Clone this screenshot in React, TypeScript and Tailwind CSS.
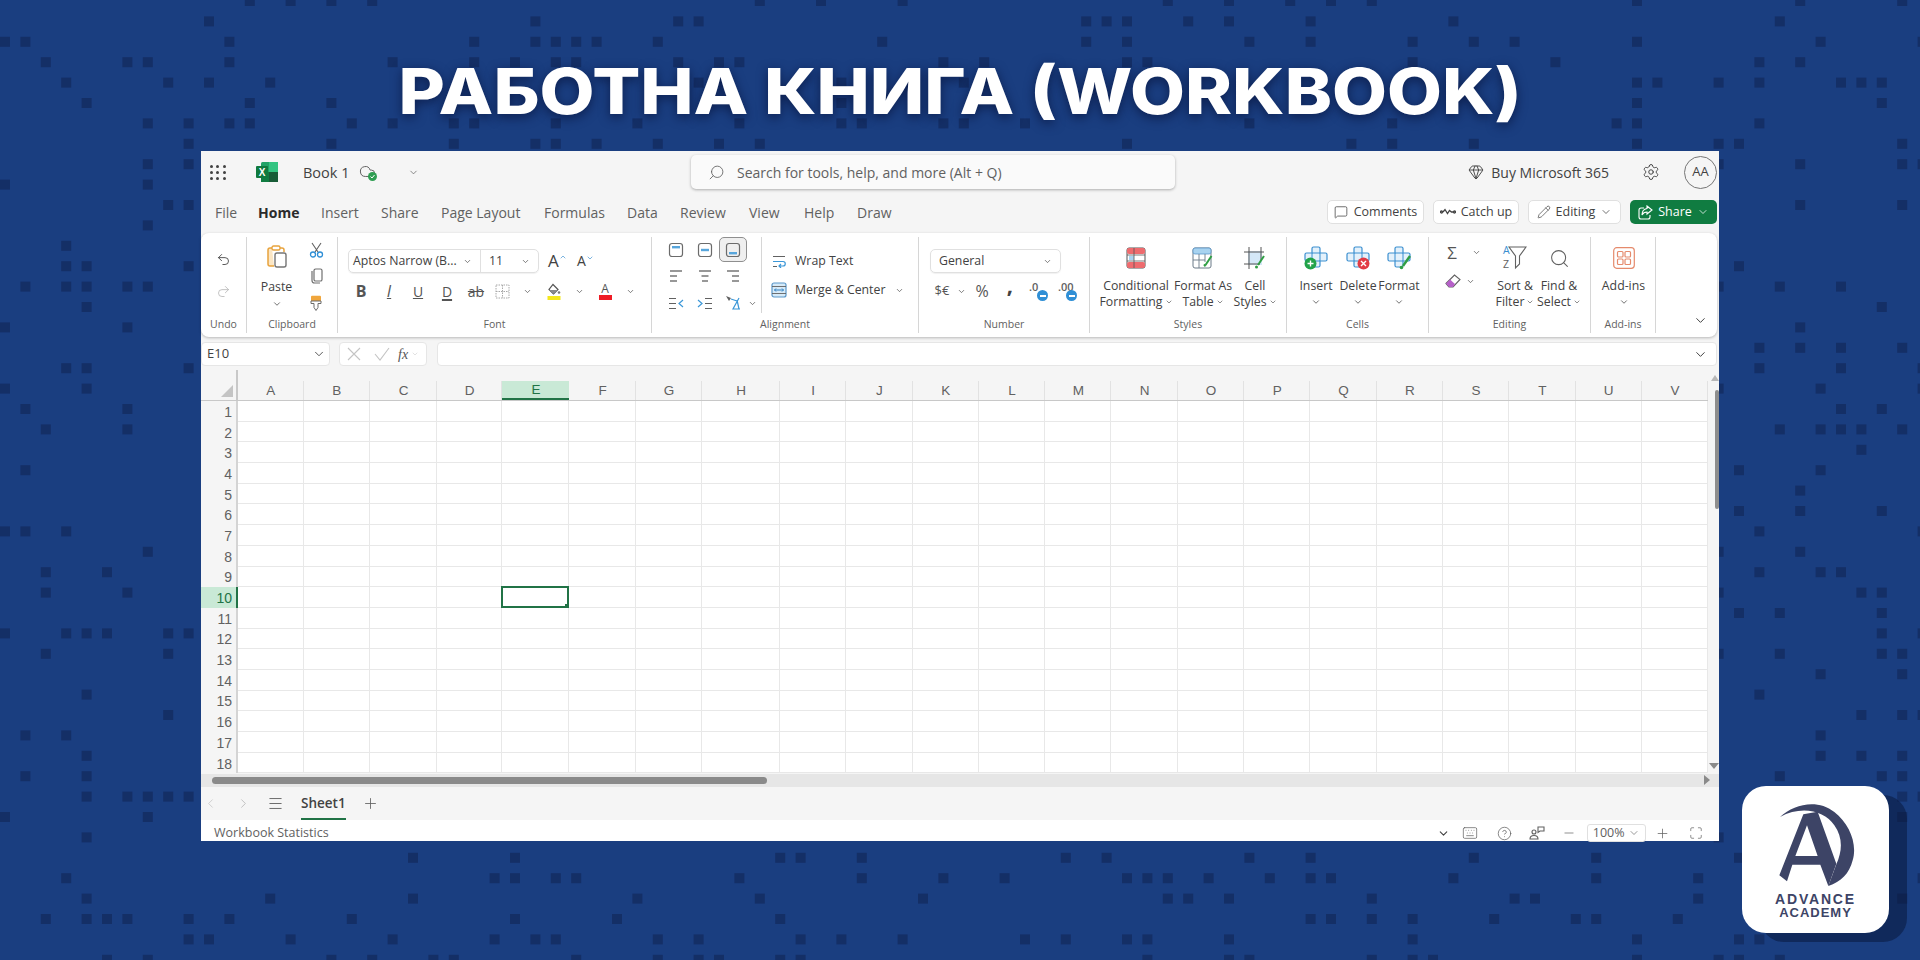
import type { ReactNode } from "react"
import {
  ChevronDown,
  ChevronLeft,
  ChevronRight,
  ChevronUp,
  CircleHelp,
  Cloud,
  Gem,
  Keyboard,
  Maximize,
  Menu,
  MessageSquare,
  Minus,
  Pencil,
  Plus,
  Search,
  Settings,
  Undo2,
  Redo2,
} from "lucide-react"

// background squares, one list of column numbers per row of the 20.4px grid
const dots: number[][] = [
  [12, 14, 16, 18, 37, 40, 44, 57, 60, 63, 65, 67, 80, 88, 93],
  [10, 26, 33, 34, 53, 54, 55, 58, 60, 64, 71, 87],
  [0, 1, 11, 23, 26, 27, 28, 29, 32, 43, 53, 55, 61, 64, 69, 72, 74, 80, 89, 94],
  [2, 6, 7, 11, 19, 23, 25, 27, 28, 33, 35, 36, 46, 48, 55, 56, 69, 76, 86, 88],
  [3, 8, 10, 13, 34, 41, 47, 80, 81, 84, 86, 90, 91, 92],
  [4, 12, 16, 41, 80, 92],
  [7, 9, 11, 12, 17, 19, 22, 23, 27, 31, 36, 41, 42, 46, 47, 50, 61, 68, 79, 80, 86],
  [9, 16, 22, 26, 27, 29, 32, 35, 37, 55, 66, 68, 72, 80, 84, 85, 93],
  [7, 9, 84, 88, 93, 94],
  [0, 7],
  [8, 9, 88, 93],
  [7],
  [3],
  [3, 4, 9, 85],
  [1, 3, 4, 6, 7, 84, 87, 90],
  [4, 92],
  [0, 6, 88],
  [86, 88, 90, 93],
  [3, 4, 9, 86, 90, 94],
  [0, 4, 84, 89, 94],
  [1, 6, 90, 92],
  [2, 6, 87, 89, 90, 91, 93],
  [91],
  [1, 85, 89],
  [88],
  [85, 88, 92],
  [0, 1, 3, 86, 94],
  [7, 84, 88],
  [2, 5, 86, 89, 90],
  [2, 6, 84, 91, 92],
  [85, 87, 92],
  [0, 3, 4, 5, 8, 9, 92, 94],
  [2, 8, 84, 87, 92, 93],
  [89, 93],
  [4, 86],
  [8, 91, 93, 94],
  [1, 3, 89],
  [4, 89, 91, 93],
  [1, 4, 87, 92, 93],
  [4, 6, 7, 8, 9, 93, 94],
  [0, 7, 93],
  [4, 84],
  [20, 25, 38, 39, 42, 52, 54, 61, 64, 72, 78, 85],
  [3, 24, 25, 27, 28, 36, 42, 46, 49, 55, 56, 57, 59, 62, 64, 65, 71, 78, 83, 94],
  [4, 13, 20, 31, 37, 45, 57, 58, 60, 67, 74, 75, 83, 93],
  [2, 4, 5, 6, 9, 11, 17, 25, 30, 38, 64, 65, 67, 69, 73, 77, 78, 82],
  [9, 10, 14, 19, 24, 26, 27, 32, 34, 39, 41, 44, 50, 52, 55, 56, 60, 69, 80, 85, 86],
  [5, 7, 16, 18, 21, 22, 28, 32, 34, 35, 38, 39, 56, 60, 61, 67, 69, 70, 80, 84, 85, 87],
]

const tabs = [
  { name: "File", w: "w-[43px]" },
  { name: "Home", w: "w-[63px]" },
  { name: "Insert", w: "w-[60px]" },
  { name: "Share", w: "w-[60px]" },
  { name: "Page Layout", w: "w-[103px]" },
  { name: "Formulas", w: "w-[83px]" },
  { name: "Data", w: "w-[53px]" },
  { name: "Review", w: "w-[69px]" },
  { name: "View", w: "w-[55px]" },
  { name: "Help", w: "w-[53px]" },
  { name: "Draw", w: "w-[40px]" },
]

const columns = "ABCDEFGHIJKLMNOPQRSTUV".split("")
const rows = Array.from({ length: 18 }, (_, i) => i + 1)

function Chev({ size = 10, className = "" }: { size?: number; className?: string }) {
  return <ChevronDown size={size} strokeWidth={2} className={"text-[#555] " + className} />
}

function AlignBox({ y }: { y: number }) {
  return (
    <svg width="16" height="16" viewBox="0 0 16 16" fill="none">
      <rect x="1.5" y="1.5" width="13" height="13" rx="2.5" stroke="#6b6b6b" strokeWidth="1.2" />
      <rect x="4" y={y} width="8" height="2.4" fill="#58a6dc" />
    </svg>
  )
}

function AlignLines({ kind }: { kind: "left" | "center" | "right" }) {
  const x = kind === "left" ? 2 : kind === "center" ? 4.5 : 7
  return (
    <svg width="16" height="14" viewBox="0 0 16 14" stroke="#616161" strokeWidth="1.3">
      <path d="M2 2H14" />
      <path d={`M${x} 7H${x + 7}`} />
      <path d={kind === "left" ? "M2 12H9" : kind === "center" ? "M5 12H11" : "M7 12H14"} />
    </svg>
  )
}

function Group({ w, label, children }: { w: string; label: string; children: ReactNode }) {
  return (
    <div className={w + " my-[4px] flex shrink-0 flex-col border-r border-[#d6d6d6]"}>
      <div className="h-[78px]">{children}</div>
      <div className="flex h-[18px] items-center justify-center pt-[1px] text-[10.5px] text-[#616161]">{label}</div>
    </div>
  )
}

function BigButton({ w, icon, top, bottom }: { w: string; icon: ReactNode; top: string; bottom?: string }) {
  return (
    <div className={w + " flex shrink-0 flex-col items-center pt-[9px]"}>
      <div className="flex h-[24px] items-center justify-center">{icon}</div>
      <div className="mt-[8px] flex h-[16px] items-center whitespace-nowrap leading-none">{top}</div>
      <div className="flex h-[16px] items-center gap-[2px] whitespace-nowrap leading-none">
        {bottom}
        <Chev size={bottom ? 8 : 10} />
      </div>
    </div>
  )
}

function Box({ w, children, className = "" }: { w: string; children: ReactNode; className?: string }) {
  return <div className={w + " flex shrink-0 items-center justify-center " + className}>{children}</div>
}

function ExcelLogo() {
  return (
    <svg width="22" height="20" viewBox="0 0 22 20">
      <rect x="5" y="0" width="17" height="20" rx="1.5" fill="#21a366" />
      <rect x="13" y="0" width="9" height="10" fill="#33c481" />
      <rect x="5" y="10" width="17" height="10" fill="#107c41" />
      <rect x="13" y="10" width="9" height="10" fill="#185c37" />
      <rect x="0" y="4" width="12" height="12" rx="1" fill="#0f7a3e" />
      <text x="6" y="13.5" fontSize="10" fontWeight="700" fill="#fff" textAnchor="middle" fontFamily="Liberation Sans, sans-serif">
        X
      </text>
    </svg>
  )
}

function PasteIcon() {
  return (
    <svg width="20" height="23" viewBox="0 0 20 23" fill="none">
      <path d="M5 3H3a2 2 0 0 0-2 2v14a2 2 0 0 0 2 2h4" stroke="#e8a33d" strokeWidth="1.5" fill="#fbe6c4" />
      <path d="M13 3h2a2 2 0 0 1 2 2v2" stroke="#e8a33d" strokeWidth="1.5" />
      <rect x="5" y="1" width="8" height="4" rx="1.5" fill="#fff" stroke="#e8a33d" strokeWidth="1.4" />
      <rect x="8" y="8" width="11" height="14" rx="2" fill="#fff" stroke="#757575" strokeWidth="1.4" />
    </svg>
  )
}

function CutIcon() {
  return (
    <svg width="15" height="16" viewBox="0 0 15 16" fill="none">
      <path d="M3 1l6 9M12 1L6 10" stroke="#616161" strokeWidth="1.1" />
      <circle cx="4" cy="12.5" r="2.5" stroke="#2f8fd6" strokeWidth="1.3" />
      <circle cx="11" cy="12.5" r="2.5" stroke="#2f8fd6" strokeWidth="1.3" />
    </svg>
  )
}

function CopyIcon() {
  return (
    <svg width="13" height="16" viewBox="0 0 13 16" fill="none" stroke="#707070" strokeWidth="1.2">
      <path d="M2 3v9.5A2.5 2.5 0 0 0 4.5 15H10" />
      <rect x="4" y="1" width="8" height="12" rx="1.6" fill="#fff" />
    </svg>
  )
}

function PainterIcon() {
  return (
    <svg width="12" height="16" viewBox="0 0 12 16" fill="none">
      <rect x="1" y="0.8" width="10" height="8" rx="1" fill="#f0a63c" />
      <path d="M1 6h10v2.5H8v4l-2 3-2-3v-4H1z" fill="#fff" stroke="#6b6b6b" strokeWidth="1" />
    </svg>
  )
}

function BordersIcon() {
  return (
    <svg width="15" height="15" viewBox="0 0 15 15" fill="none" stroke="#a8a8a8" strokeWidth="1" strokeDasharray="1.5 1">
      <rect x="1" y="1" width="13" height="13" />
      <path d="M7.5 1v13M1 7.5h13" />
    </svg>
  )
}

function FillIcon() {
  return (
    <svg width="14" height="17" viewBox="0 0 14 17" fill="none">
      <path d="M6 1.5L11 6.5 6.5 11 2 6.500z" stroke="#555" strokeWidth="1.2" />
      <path d="M2 7h9l-4.500 4z" fill="#8a8a8a" />
      <circle cx="12" cy="9.5" r="1.3" fill="#777" />
      <rect x="0.5" y="13" width="13" height="4" fill="#f4e71d" />
    </svg>
  )
}

function WrapIcon() {
  return (
    <svg width="14" height="13" viewBox="0 0 14 13" fill="none" strokeWidth="1.2">
      <path d="M1 1.5h12M1 11.5h4" stroke="#616161" />
      <path d="M1 6.5h10a1.700 1.700 0 0 1 0 4.500H7.500M9 9l-2 2 2 2" stroke="#3b97d8" />
    </svg>
  )
}

function MergeIcon() {
  return (
    <svg width="16" height="16" viewBox="0 0 16 16" fill="none">
      <rect x="1" y="1" width="14" height="14" rx="2" stroke="#5a97c9" strokeWidth="1.2" fill="#d6eaf8" />
      <path d="M1 4.500h14M1 11.500h14" stroke="#616161" strokeWidth="0.9" />
      <path d="M3.500 8h9M5 6.500L3.500 8 5 9.500M11 6.500L12.500 8 11 9.500" stroke="#2f80c2" strokeWidth="1" />
    </svg>
  )
}

function IndentIcon({ flip = false }: { flip?: boolean }) {
  return (
    <svg width="16" height="13" viewBox="0 0 16 13" fill="none" strokeWidth="1.2" className={flip ? "-scale-x-100" : ""}>
      <path d="M1 1.500h7M1 6.500h7M1 11.500h7" stroke="#616161" />
      <path d="M15 3l-4 3.500 4 3.500" stroke="#3b97d8" />
    </svg>
  )
}

function OrientationIcon() {
  return (
    <svg width="16" height="16" viewBox="0 0 16 16" fill="none">
      <path d="M1 1l5 2-2 3z" fill="#616161" />
      <path d="M6 4l6 2M14 3l-6 11h7M12 5l2 9" stroke="#3b97d8" strokeWidth="1.2" />
    </svg>
  )
}

function DecimalIcon({ text }: { text: string }) {
  return (
    <div className="relative flex h-[20px] w-[20px] items-start justify-start text-[11px] font-semibold leading-[12px] text-[#616161]">
      {text}
      <span className="absolute bottom-0 right-[1px] flex h-[11px] w-[11px] items-center justify-center rounded-full bg-[#2f8fd6]">
        <span className="h-[2px] w-[6px] bg-white" />
      </span>
    </div>
  )
}

function CondFormatIcon() {
  return (
    <svg width="20" height="22" viewBox="0 0 20 22">
      <rect x="1" y="1" width="18" height="20" rx="2" fill="#fff" stroke="#555" strokeWidth="1" />
      <rect x="1" y="1" width="18" height="6" rx="2" fill="#ee6b6e" />
      <rect x="1" y="15" width="18" height="6" rx="2" fill="#ee6b6e" />
      <rect x="3" y="9" width="5" height="4" fill="#a8d3f0" />
      <path d="M1 8h18M1 14h18M8 1v20" stroke="#555" strokeWidth="0.8" />
    </svg>
  )
}

function TablePenIcon() {
  return (
    <svg width="22" height="22" viewBox="0 0 22 22" fill="none">
      <rect x="1" y="1" width="18" height="20" rx="2" fill="#fff" stroke="#6b7a88" strokeWidth="1" />
      <rect x="1" y="1" width="18" height="6" rx="2" fill="#a8d3f0" stroke="#5a97c9" strokeWidth="0.8" />
      <path d="M1 13h12M7 7v14M13 7v8" stroke="#6b7a88" strokeWidth="0.9" />
      <path d="M19.500 9l-6 9" stroke="#2f9e44" strokeWidth="2" />
      <path d="M12 19l1.500-1.200" stroke="#2f9e44" strokeWidth="2.4" />
    </svg>
  )
}

function CellStylesIcon() {
  return (
    <svg width="22" height="22" viewBox="0 0 22 22" fill="none">
      <rect x="4" y="4" width="14" height="14" fill="#d4e8f8" />
      <path d="M0 5h20M0 17h16M5 0v22M17 0v13" stroke="#555" strokeWidth="1" />
      <path d="M20 9l-6 9" stroke="#2f9e44" strokeWidth="2" />
      <circle cx="12.500" cy="20" r="1.500" fill="#2f9e44" />
    </svg>
  )
}

function CrossCells({ badge }: { badge: "add" | "del" | "pen" }) {
  return (
    <svg width="24" height="24" viewBox="0 0 24 24" fill="none">
      <path
        d="M8 7V2.500A1.500 1.500 0 0 1 9.500 1h5A1.500 1.500 0 0 1 16 2.500V7h5.500A1.500 1.500 0 0 1 23 8.500v5a1.500 1.500 0 0 1-1.500 1.500H16v4.500a1.500 1.500 0 0 1-1.500 1.500h-5A1.500 1.500 0 0 1 8 19.500V15H2.500A1.500 1.500 0 0 1 1 13.500v-5A1.500 1.500 0 0 1 2.500 7z"
        fill="#e4f1fb"
        stroke="#3b8fd0"
        strokeWidth="1.2"
      />
      <path d="M8 7h8v8H8z" stroke="#3b8fd0" strokeWidth="1" />
      {badge === "add" && (
        <g>
          <circle cx="6.500" cy="17.500" r="6" fill="#22a34a" />
          <path d="M3.500 17.500h6M6.500 14.500v6" stroke="#fff" strokeWidth="1.4" />
        </g>
      )}
      {badge === "del" && (
        <g>
          <circle cx="17.500" cy="17.500" r="6" fill="#e23b44" />
          <path d="M15 15l5 5M20 15l-5 5" stroke="#fff" strokeWidth="1.4" />
        </g>
      )}
      {badge === "pen" && (
        <g>
          <path d="M23 10l-7 10" stroke="#2f9e44" strokeWidth="2.4" />
          <circle cx="14.500" cy="21.500" r="1.800" fill="#2f9e44" />
        </g>
      )}
    </svg>
  )
}

function EraserIcon() {
  return (
    <svg width="16" height="14" viewBox="0 0 16 14" fill="none">
      <path d="M1 9.500L9.500 1 15 5.500 8 13H4z" fill="#fff" stroke="#616161" strokeWidth="1.1" />
      <path d="M1 9.500L5 5.500 10 10 8 13H4z" fill="#b660c9" />
    </svg>
  )
}

function SortIcon() {
  return (
    <div className="relative h-[24px] w-[24px]">
      <svg width="24" height="24" viewBox="0 0 24 24" fill="none" className="absolute left-0 top-0">
        <path d="M6 1h17l-6.500 9v8l-4 4V10z" stroke="#616161" strokeWidth="1.1" fill="#fff" />
      </svg>
      <span className="absolute left-0 top-[-2px] text-[10.5px] leading-[13px] text-[#3b8fd0]">A</span>
      <span className="absolute bottom-[-1px] left-0 text-[10.5px] leading-[13px] text-[#616161]">Z</span>
    </div>
  )
}

function AddinsIcon() {
  return (
    <svg width="22" height="22" viewBox="0 0 22 22" fill="none" stroke="#e58a6c" strokeWidth="1.2">
      <rect x="0.7" y="0.7" width="20.6" height="20.6" rx="3" />
      <rect x="4.500" y="4.500" width="5.500" height="5.500" rx="1" />
      <rect x="12" y="4.500" width="5.500" height="5.500" rx="1" />
      <rect x="4.500" y="12" width="5.500" height="5.500" rx="1" />
      <rect x="12" y="12" width="5.500" height="5.500" rx="1" />
    </svg>
  )
}

function Ribbon() {
  return (
    <div className="flex h-[104px] w-[1516px] rounded-[8px] bg-white text-[12.3px] text-[#424242] shadow-[0_1px_3px_rgba(0,0,0,0.25)]">
      <Group w="w-[46px]" label="Undo">
        <div className="flex flex-col items-center gap-[17px] pt-[15px]">
          <Undo2 size={15} strokeWidth={1.4} className="text-[#444]" />
          <Redo2 size={15} strokeWidth={1.3} className="text-[#b5b5b5]" />
        </div>
      </Group>

      <Group w="w-[91px]" label="Clipboard">
        <div className="flex">
          <div className="flex w-[59px] flex-col items-center pt-[8px]">
            <PasteIcon />
            <div className="mt-[11px] h-[16px] leading-[16px]">Paste</div>
            <Chev size={10} className="mt-[4px]" />
          </div>
          <div className="flex w-[20px] flex-col items-center pt-[5px]">
            <CutIcon />
            <div className="mt-[10px]">
              <CopyIcon />
            </div>
            <div className="mt-[11px]">
              <PainterIcon />
            </div>
          </div>
        </div>
      </Group>

      <Group w="w-[314px]" label="Font">
        <div className="flex pl-[10px] pt-[12px]">
          <div className="flex h-[24px] w-[191px] rounded-[5px] border border-[#e0e0e0] shadow-[0_1px_1px_rgba(0,0,0,0.06)]">
            <div className="flex w-[132px] items-center justify-between border-r border-[#e0e0e0] pl-[4px] pr-[8px] whitespace-nowrap">
              <span>Aptos Narrow (B...</span>
              <Chev size={9} />
            </div>
            <div className="flex flex-1 items-center justify-between pl-[8px] pr-[8px]">
              <span>11</span>
              <Chev size={9} />
            </div>
          </div>
          <div className="ml-[9px] flex h-[22px] w-[17px] items-end text-[17px] leading-[21px]">
            A
            <ChevronUp size={8} strokeWidth={2} className="mb-[10px] shrink-0 text-[#3b8fd0]" />
          </div>
          <div className="ml-[12px] flex h-[22px] w-[17px] items-end text-[14px] leading-[20px]">
            A
            <ChevronDown size={8} strokeWidth={2} className="mb-[9px] shrink-0 text-[#3b8fd0]" />
          </div>
        </div>
        <div className="mt-[6px] flex h-[24px] pl-[10px] text-[#555]">
          <Box w="w-[26px]" className="text-[16px] font-bold">B</Box>
          <Box w="w-[30px]" className="text-[16px] italic underline decoration-1">I</Box>
          <Box w="w-[28px]" className="text-[14px] underline">U</Box>
          <Box w="w-[30px]" className="text-[14px] underline decoration-2 underline-offset-2">D</Box>
          <Box w="w-[28px]" className="text-[14px] line-through">ab</Box>
          <Box w="w-[24px]"><BordersIcon /></Box>
          <Box w="w-[27px]"><Chev size={9} /></Box>
          <Box w="w-[26px]"><FillIcon /></Box>
          <Box w="w-[24px]"><Chev size={9} /></Box>
          <Box w="w-[28px]">
            <div className="flex flex-col items-center">
              <span className="text-[12px] leading-[12px]">A</span>
              <span className="h-[5px] w-[13px] bg-[#ee1c25]" />
            </div>
          </Box>
          <Box w="w-[22px]"><Chev size={9} /></Box>
        </div>
      </Group>

      <Group w="w-[267px]" label="Alignment">
        <div className="flex h-full">
          <div className="h-[76px] w-[110px] border-r border-[#d6d6d6] pl-[10px]">
            <div className="flex h-[25px]">
              <Box w="w-[28px]"><AlignBox y={4} /></Box>
              <Box w="w-[29px]"><AlignBox y={6.8} /></Box>
              <Box w="w-[28px]" className="rounded-[5px] border border-[#8f8f8f] bg-[#efefef]"><AlignBox y={10} /></Box>
            </div>
            <div className="flex h-[28px]">
              <Box w="w-[28px]"><AlignLines kind="left" /></Box>
              <Box w="w-[29px]"><AlignLines kind="center" /></Box>
              <Box w="w-[28px]"><AlignLines kind="right" /></Box>
            </div>
            <div className="flex h-[26px]">
              <Box w="w-[28px]"><IndentIcon /></Box>
              <Box w="w-[29px]"><IndentIcon flip /></Box>
              <Box w="w-[28px]"><OrientationIcon /></Box>
              <Box w="w-[10px]"><Chev size={9} /></Box>
            </div>
          </div>
          <div className="pt-[12px]">
            <div className="flex h-[24px] items-center">
              <Box w="w-[33px]"><WrapIcon /></Box>
              <span>Wrap Text</span>
            </div>
            <div className="mt-[5px] flex h-[24px] items-center">
              <Box w="w-[33px]"><MergeIcon /></Box>
              <span>Merge &amp; Center</span>
              <Chev size={9} className="ml-[10px]" />
            </div>
          </div>
        </div>
      </Group>

      <Group w="w-[171px]" label="Number">
        <div className="pl-[11px] pt-[12px]">
          <div className="flex h-[24px] w-[131px] items-center justify-between rounded-[5px] border border-[#e0e0e0] pl-[8px] pr-[8px] shadow-[0_1px_1px_rgba(0,0,0,0.06)]">
            <span>General</span>
            <Chev size={9} />
          </div>
          <div className="mt-[6px] flex h-[24px] text-[#555]">
            <Box w="w-[24px]" className="text-[13px]">$€</Box>
            <Box w="w-[14px]"><Chev size={9} /></Box>
            <Box w="w-[28px]" className="text-[16px]">%</Box>
            <Box w="w-[28px]" className="text-[22px] font-bold leading-none text-[#424242]">
              <span className="-mt-[14px]">,</span>
            </Box>
            <Box w="w-[30px]"><DecimalIcon text=".0" /></Box>
            <Box w="w-[28px]"><DecimalIcon text=".00" /></Box>
          </div>
        </div>
      </Group>

      <Group w="w-[197px]" label="Styles">
        <div className="flex pl-[10px]">
          <BigButton w="w-[72px]" icon={<CondFormatIcon />} top="Conditional" bottom="Formatting" />
          <BigButton w="w-[62px]" icon={<TablePenIcon />} top="Format As" bottom="Table" />
          <BigButton w="w-[42px]" icon={<CellStylesIcon />} top="Cell" bottom="Styles" />
        </div>
      </Group>

      <Group w="w-[142px]" label="Cells">
        <div className="flex pl-[8px]">
          <BigButton w="w-[42px]" icon={<CrossCells badge="add" />} top="Insert" />
          <BigButton w="w-[42px]" icon={<CrossCells badge="del" />} top="Delete" />
          <BigButton w="w-[40px]" icon={<CrossCells badge="pen" />} top="Format" />
        </div>
      </Group>

      <Group w="w-[162px]" label="Editing">
        <div className="flex">
          <div className="w-[64px] pt-[6px]">
            <div className="flex h-[18px] items-center pl-[15px]">
              <span className="w-[16px] text-center text-[17px] leading-none text-[#555]">Σ</span>
              <Chev size={9} className="ml-[12px]" />
            </div>
            <div className="mt-[11px] flex h-[18px] items-center pl-[16px]">
              <EraserIcon />
              <Chev size={9} className="ml-[5px]" />
            </div>
          </div>
          <BigButton w="w-[44px]" icon={<SortIcon />} top="Sort &" bottom="Filter" />
          <BigButton
            w="w-[44px]"
            icon={<Search size={21} strokeWidth={1.2} className="text-[#616161]" />}
            top="Find &"
            bottom="Select"
          />
        </div>
      </Group>

      <Group w="w-[65px]" label="Add-ins">
        <BigButton w="w-[65px]" icon={<AddinsIcon />} top="Add-ins" />
      </Group>

      <div className="flex flex-1 items-end justify-end pb-[9px] pr-[9px]">
        <ChevronDown size={15} strokeWidth={1.6} className="text-[#424242]" />
      </div>
    </div>
  )
}

function SheetGrid() {
  return (
    <div className="grid h-[403.6px] grid-cols-[37px_65.5px_66.5px_67px_65px_67px_67px_66px_78px_repeat(14,66.3px)] grid-rows-[31px_repeat(18,20.7px)] font-['Liberation_Sans',sans-serif] text-[13.5px] text-[#616161]">
      <div className="flex items-end justify-end border-r-2 border-b border-[#c8c8c8] pb-[3px] pr-[3px]">
        <span className="h-0 w-0 border-b-[12px] border-l-[12px] border-b-[#c4c4c4] border-l-transparent" />
      </div>
      {columns.map((c) => (
        <div key={c} className="flex flex-col justify-end border-b border-[#c8c8c8]">
          <div
            className={
              c === "E"
                ? "flex h-[19px] items-center justify-center border-b-2 border-[#217346] bg-[#c9e9d6] pl-[1px] pt-[2px] text-[#217346]"
                : "flex h-[19px] items-center justify-center border-r border-[#e2e2e2] pl-[1px] pt-[2px]"
            }
          >
            {c}
          </div>
        </div>
      ))}
      {rows.map((r) => [
        <div
          key={"n" + r}
          className={
            r === 10
              ? "flex items-center justify-end border-r-2 border-[#217346] bg-[#c9e9d6] pr-[4px] pt-[2px] text-[14px] text-[#217346]"
              : "flex items-center justify-end border-r-2 border-[#d4d4d4] pr-[4px] pt-[2px] text-[14px]"
          }
        >
          {r}
        </div>,
        ...columns.map((c) => (
          <div key={c + r} className="relative border-r border-b border-[#e8e8e8] bg-white">
            {c === "E" && r === 10 && (
              <div className="absolute -left-[1px] -top-[1px] h-[22px] w-[68px] border-2 border-[#217346]">
                <span className="absolute -bottom-[4px] -right-[4px] h-[6px] w-[6px] bg-[#217346]" />
              </div>
            )}
          </div>
        )),
      ])}
    </div>
  )
}

export default function App() {
  return (
    <div className="relative h-[960px] w-[1920px] overflow-hidden bg-[#1a3e80] font-['Open_Sans',sans-serif]">
      <svg className="absolute inset-0" width="1920" height="960" viewBox="0 0 1920 960">
        {dots.map((row, j) =>
          row.map((k) => <rect key={j + "-" + k} x={k * 20.4} y={j * 20.4 - 4} width="10" height="10" fill="#142f66" />),
        )}
      </svg>

      <div className="relative flex h-[151px] items-start justify-center pt-[45px]">
        <h1 className="scale-x-[1.13] whitespace-nowrap font-['Inter',sans-serif] text-[63px] font-extrabold leading-[92px] text-white [text-shadow:0_3px_10px_rgba(8,20,60,0.75)]">
          РАБОТНА КНИГА (WORKBOOK)
        </h1>
      </div>

      <div className="relative ml-[201px] flex h-[690px] w-[1518px] flex-col bg-[#f5f5f5]">
        <div className="flex h-[42px] shrink-0 items-center text-[#424242]">
          <div className="ml-[9px] grid w-[16px] grid-cols-3 gap-[3px]">
            {Array.from({ length: 9 }, (_, i) => (
              <span key={i} className="h-[3px] w-[3px] rounded-full bg-[#424242]" />
            ))}
          </div>
          <div className="ml-[30px]">
            <ExcelLogo />
          </div>
          <span className="ml-[25px] w-[44px] whitespace-nowrap pt-[1px] text-[14.5px]">Book 1</span>
          <div className="relative ml-[12px] h-[18px] w-[18px]">
            <Cloud size={17} strokeWidth={1.3} className="text-[#555]" />
            <span className="absolute bottom-0 right-0 flex h-[9px] w-[9px] items-center justify-center rounded-full bg-[#2f9e52]">
              <svg width="7" height="7" viewBox="0 0 7 7" fill="none" stroke="#fff" strokeWidth="1">
                <path d="M1.500 3.500l1.500 1.500 2.500-3" />
              </svg>
            </span>
          </div>
          <ChevronDown size={11} strokeWidth={1.6} className="ml-[31px] text-[#616161]" />
          <div className="ml-[272px] flex h-[34px] w-[484px] items-center rounded-[5px] bg-[#fafafa] pl-[17px] shadow-[0_1px_3px_rgba(0,0,0,0.3)]">
            <Search size={17} strokeWidth={1.2} className="-scale-x-100 text-[#616161]" />
            <span className="ml-[12px] whitespace-nowrap text-[14px] text-[#616161]">
              Search for tools, help, and more (Alt + Q)
            </span>
          </div>
          <div className="ml-auto flex items-center pr-[2px]">
            <Gem size={16} strokeWidth={1.4} />
            <span className="ml-[7px] whitespace-nowrap text-[14px]">Buy Microsoft 365</span>
            <Settings size={18} strokeWidth={1.3} className="ml-[33px]" />
            <div className="ml-[24px] flex h-[33px] w-[33px] items-center justify-center rounded-full border border-[#757575] text-[13px]">
              AA
            </div>
          </div>
        </div>

        <div className="flex h-[40px] shrink-0 items-center pb-[2px] pl-[14px] text-[14px] text-[#616161]">
          {tabs.map((t) => (
            <span
              key={t.name}
              className={t.w + (t.name === "Home" ? " font-bold text-[#2b2b2b]" : "") + " whitespace-nowrap"}
            >
              {t.name}
            </span>
          ))}
          <div className="ml-auto flex items-center gap-[9px] pr-[2px] text-[12.5px] text-[#424242]">
            <div className="flex h-[24px] w-[97px] items-center justify-center gap-[6px] rounded-[5px] border border-[#e0e0e0] bg-white">
              <MessageSquare size={14} strokeWidth={1.3} />
              Comments
            </div>
            <div className="flex h-[24px] w-[86px] items-center justify-center gap-[5px] rounded-[5px] border border-[#e0e0e0] bg-white">
              <svg width="16" height="8" viewBox="0 0 16 8" fill="none" stroke="#424242" strokeWidth="1.3">
                <circle cx="1.500" cy="4" r="1" />
                <path d="M3 4l2-2.500 2.500 4 2-3 2 1.500h1.500" />
                <circle cx="14.500" cy="4" r="1" />
              </svg>
              Catch up
            </div>
            <div className="flex h-[24px] w-[93px] items-center justify-center gap-[5px] rounded-[5px] border border-[#e0e0e0] bg-white">
              <Pencil size={14} strokeWidth={1.2} />
              Editing
              <ChevronDown size={12} strokeWidth={1.5} />
            </div>
            <div className="flex h-[24px] w-[87px] items-center justify-center gap-[5px] rounded-[5px] bg-[#107c41] text-white">
              <svg width="15" height="15" viewBox="0 0 15 15" fill="none" stroke="#fff" strokeWidth="1.1">
                <path d="M6 3H3a2 2 0 0 0-2 2v7a2 2 0 0 0 2 2h7a2 2 0 0 0 2-2v-2" />
                <path d="M9 1l5 4-5 4V7C6.500 7 5 8 4 10c0-4 2-6 5-6.500z" />
              </svg>
              Share
              <ChevronDown size={12} strokeWidth={1.5} />
            </div>
          </div>
        </div>

        <Ribbon />

        <div className="mt-[5px] flex h-[24px] shrink-0 gap-[9px] pr-[2px] text-[#424242]">
          <div className="flex w-[129px] items-center justify-between rounded-[4px] border border-[#e6e6e6] bg-white pl-[5px] pr-[3px] text-[13px]">
            E10
            <ChevronDown size={14} strokeWidth={1.5} />
          </div>
          <div className="flex w-[88px] items-center rounded-[4px] border border-[#e6e6e6] bg-white pl-[6px] text-[#c4c4c4]">
            <svg width="16" height="16" viewBox="0 0 16 16" fill="none" stroke="#c4c4c4" strokeWidth="1.1">
              <path d="M2 2l12 12M14 2L2 14" />
            </svg>
            <svg width="16" height="16" viewBox="0 0 16 16" fill="none" stroke="#c4c4c4" strokeWidth="1.1" className="ml-[12px]">
              <path d="M1 8l5 6L15 2" />
            </svg>
            <span className="ml-[8px] font-['Liberation_Serif',serif] text-[14px] italic text-[#555]">fx</span>
            <ChevronDown size={8} strokeWidth={1.5} className="ml-[3px]" />
          </div>
          <div className="ml-px flex flex-1 items-center justify-end rounded-[4px] border border-[#e6e6e6] bg-white pr-[8px]">
            <ChevronDown size={15} strokeWidth={1.6} className="text-[#424242]" />
          </div>
        </div>

        <div className="mt-[4px] flex">
          <SheetGrid />
          <div className="flex w-[11px] flex-col items-end">
            <span className="mt-[5px] h-0 w-0 border-x-[4px] border-b-[6px] border-x-transparent border-b-[#b8b8b8]" />
            <span className="mt-[9px] h-[119px] w-[4px] rounded-full bg-[#8e8e8e]" />
            <span className="mb-[5px] mt-auto h-0 w-0 border-x-[5px] border-t-[6px] border-x-transparent border-t-[#8a8a8a]" />
          </div>
        </div>

        <div className="flex h-[13.4px] shrink-0 items-center bg-[#e6e6e6] pl-[11px] pr-[9px]">
          <span className="h-[7px] w-[555px] rounded-full bg-[#8a8a8a]" />
          <span className="ml-auto h-0 w-0 border-y-[5px] border-l-[6px] border-y-transparent border-l-[#8a8a8a]" />
        </div>

        <div className="flex h-[33px] shrink-0 items-center text-[#616161]">
          <ChevronLeft size={15} strokeWidth={1.2} className="ml-[2px] text-[#c4c4c4]" />
          <ChevronRight size={15} strokeWidth={1.2} className="ml-[18px] text-[#b0b0b0]" />
          <Menu size={17} strokeWidth={1.3} className="ml-[16px]" />
          <div className="ml-[17px] flex h-full flex-col items-center justify-center border-b-2 border-[#217346] pt-[1px] text-[13.5px] font-semibold text-[#424242]">
            Sheet1
          </div>
          <Plus size={17} strokeWidth={1.2} className="ml-[16px]" />
        </div>

        <div className="flex h-[21px] shrink-0 items-center bg-white pl-[13px] pt-[6px] text-[12.5px] text-[#616161]">
          <span className="whitespace-nowrap">Workbook Statistics</span>
          <ChevronDown size={13} strokeWidth={2} className="ml-[1108px] text-[#424242]" />
          <Keyboard size={16} strokeWidth={1.1} className="ml-[12px]" />
          <CircleHelp size={15} strokeWidth={1.2} className="ml-[19px]" />
          <svg width="16" height="14" viewBox="0 0 16 14" fill="none" stroke="#616161" strokeWidth="1.1" className="ml-[17px]">
            <circle cx="5" cy="6" r="2" />
            <path d="M1 13c0-2.500 1.500-3.500 4-3.500S9 10.500 9 13z" />
            <path d="M9 1h6v4h-4l-2 1.500z" />
          </svg>
          <Minus size={14} strokeWidth={1.2} className="ml-[17px]" />
          <div className="ml-[11px] flex h-[18px] w-[59px] items-center justify-center gap-[3px] rounded-[3px] border border-[#e0e0e0]">
            100%
            <ChevronDown size={12} strokeWidth={1.3} />
          </div>
          <Plus size={15} strokeWidth={1.2} className="ml-[9px]" />
          <Maximize size={14} strokeWidth={1.2} className="ml-[19px]" />
        </div>
      </div>

      <div className="absolute left-[1742px] top-[786px] flex h-[147px] w-[147px] flex-col items-center rounded-[24px] bg-white pt-[16px] shadow-[18px_9px_0_rgba(10,24,60,0.55)]">
        <svg width="80" height="86" viewBox="1125 185 240 258" fill="#3d4466">
          <path
            fillRule="evenodd"
            d="M1135 405L1207 222L1250 214L1306 370L1282 437L1258 373H1174L1158 423ZM1218 255L1183 347H1250Z"
          />
          <path d="M1137 230C1180 190 1250 175 1300 215C1345 250 1370 310 1355 360C1345 400 1320 425 1282 437L1306 372C1325 330 1325 290 1300 255C1270 210 1200 195 1137 230Z" />
        </svg>
        <div className="mt-[4px] font-['Liberation_Sans',sans-serif] text-[14px] font-bold leading-[14px] tracking-[1.8px] text-[#3d4466]">
          ADVANCE
        </div>
        <div className="font-['Liberation_Sans',sans-serif] text-[13px] font-bold leading-[13px] tracking-[1px] text-[#3d4466]">
          ACADEMY
        </div>
      </div>
    </div>
  )
}
